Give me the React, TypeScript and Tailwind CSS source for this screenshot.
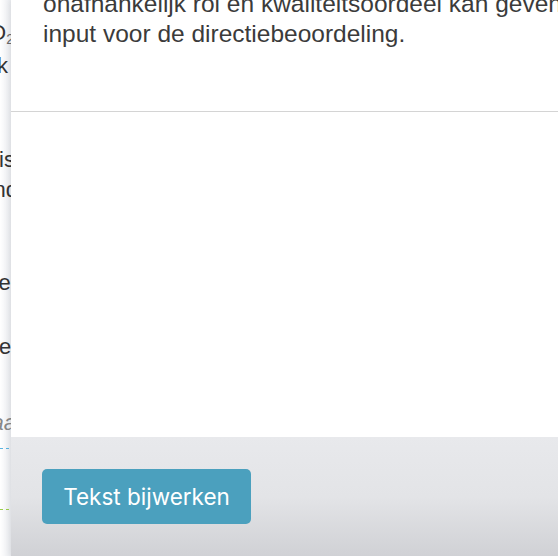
import React from "react";

const font = { fontFamily: '"Liberation Sans", Arial, sans-serif' };

function Frag({ children, className = "" }: { children: React.ReactNode; className?: string }) {
  return (
    <div className={"flex justify-end whitespace-nowrap leading-[30px] " + className}>
      <span>{children}</span>
    </div>
  );
}

export default function App() {
  return (
    <div className="w-[558px] h-[556px] flex overflow-hidden bg-white" style={font}>
      <div className="w-[11px] shrink-0 h-full overflow-hidden bg-gradient-to-r from-white to-[#e9ebef] text-[#333] text-[22px] flex flex-col">
        <Frag className="mt-[18px] mr-[-3px]">
          CO<sub className="text-[14px] text-[#666]">2</sub>
        </Frag>
        <Frag className="mt-[3px] mr-[3px]">k</Frag>
        <Frag className="mt-[64px] mr-[-4px]">is</Frag>
        <Frag className="mr-[-7px]">nd</Frag>
        <Frag className="mt-[63px] mr-[-7px]">er</Frag>
        <Frag className="mt-[34px] mr-[-5px]">el</Frag>
        <Frag className="mt-[46px] mr-[-5px] italic text-[#888]">aa</Frag>
        <div className="mt-[10px] w-[9px] border-t border-dashed border-[#5ab4e0]" />
        <div className="mt-[60px] w-[9px] border-t border-dashed border-[#9acd4a]" />
      </div>
      <div className="flex-1 flex flex-col h-full bg-white shadow-[-2px_0_6px_rgba(0,0,0,0.06)]">
        <div className="h-[112px] border-b border-[#d4d4d4] overflow-hidden">
          <p className="mt-[-11px] pl-[32px] text-[24.5px] leading-[30px] text-[#3b3b3b] whitespace-nowrap">
            onafhankelijk rol en kwaliteitsoordeel kan geven
            <br />
            input voor de directiebeoordeling.
          </p>
        </div>
        <div className="flex-1" />
        <div className="h-[119px] bg-gradient-to-b from-[#e8e9ec] via-[#e3e4e7] to-[#d0d1d5] pt-[32px] pl-[31px]">
          <button
            className="w-[209px] h-[55px] rounded-[5px] bg-[#4ba0be] text-white text-[22.5px]"
            style={{ fontFamily: 'Inter, "Open Sans", sans-serif' }}
          >
            Tekst bijwerken
          </button>
        </div>
      </div>
    </div>
  );
}
